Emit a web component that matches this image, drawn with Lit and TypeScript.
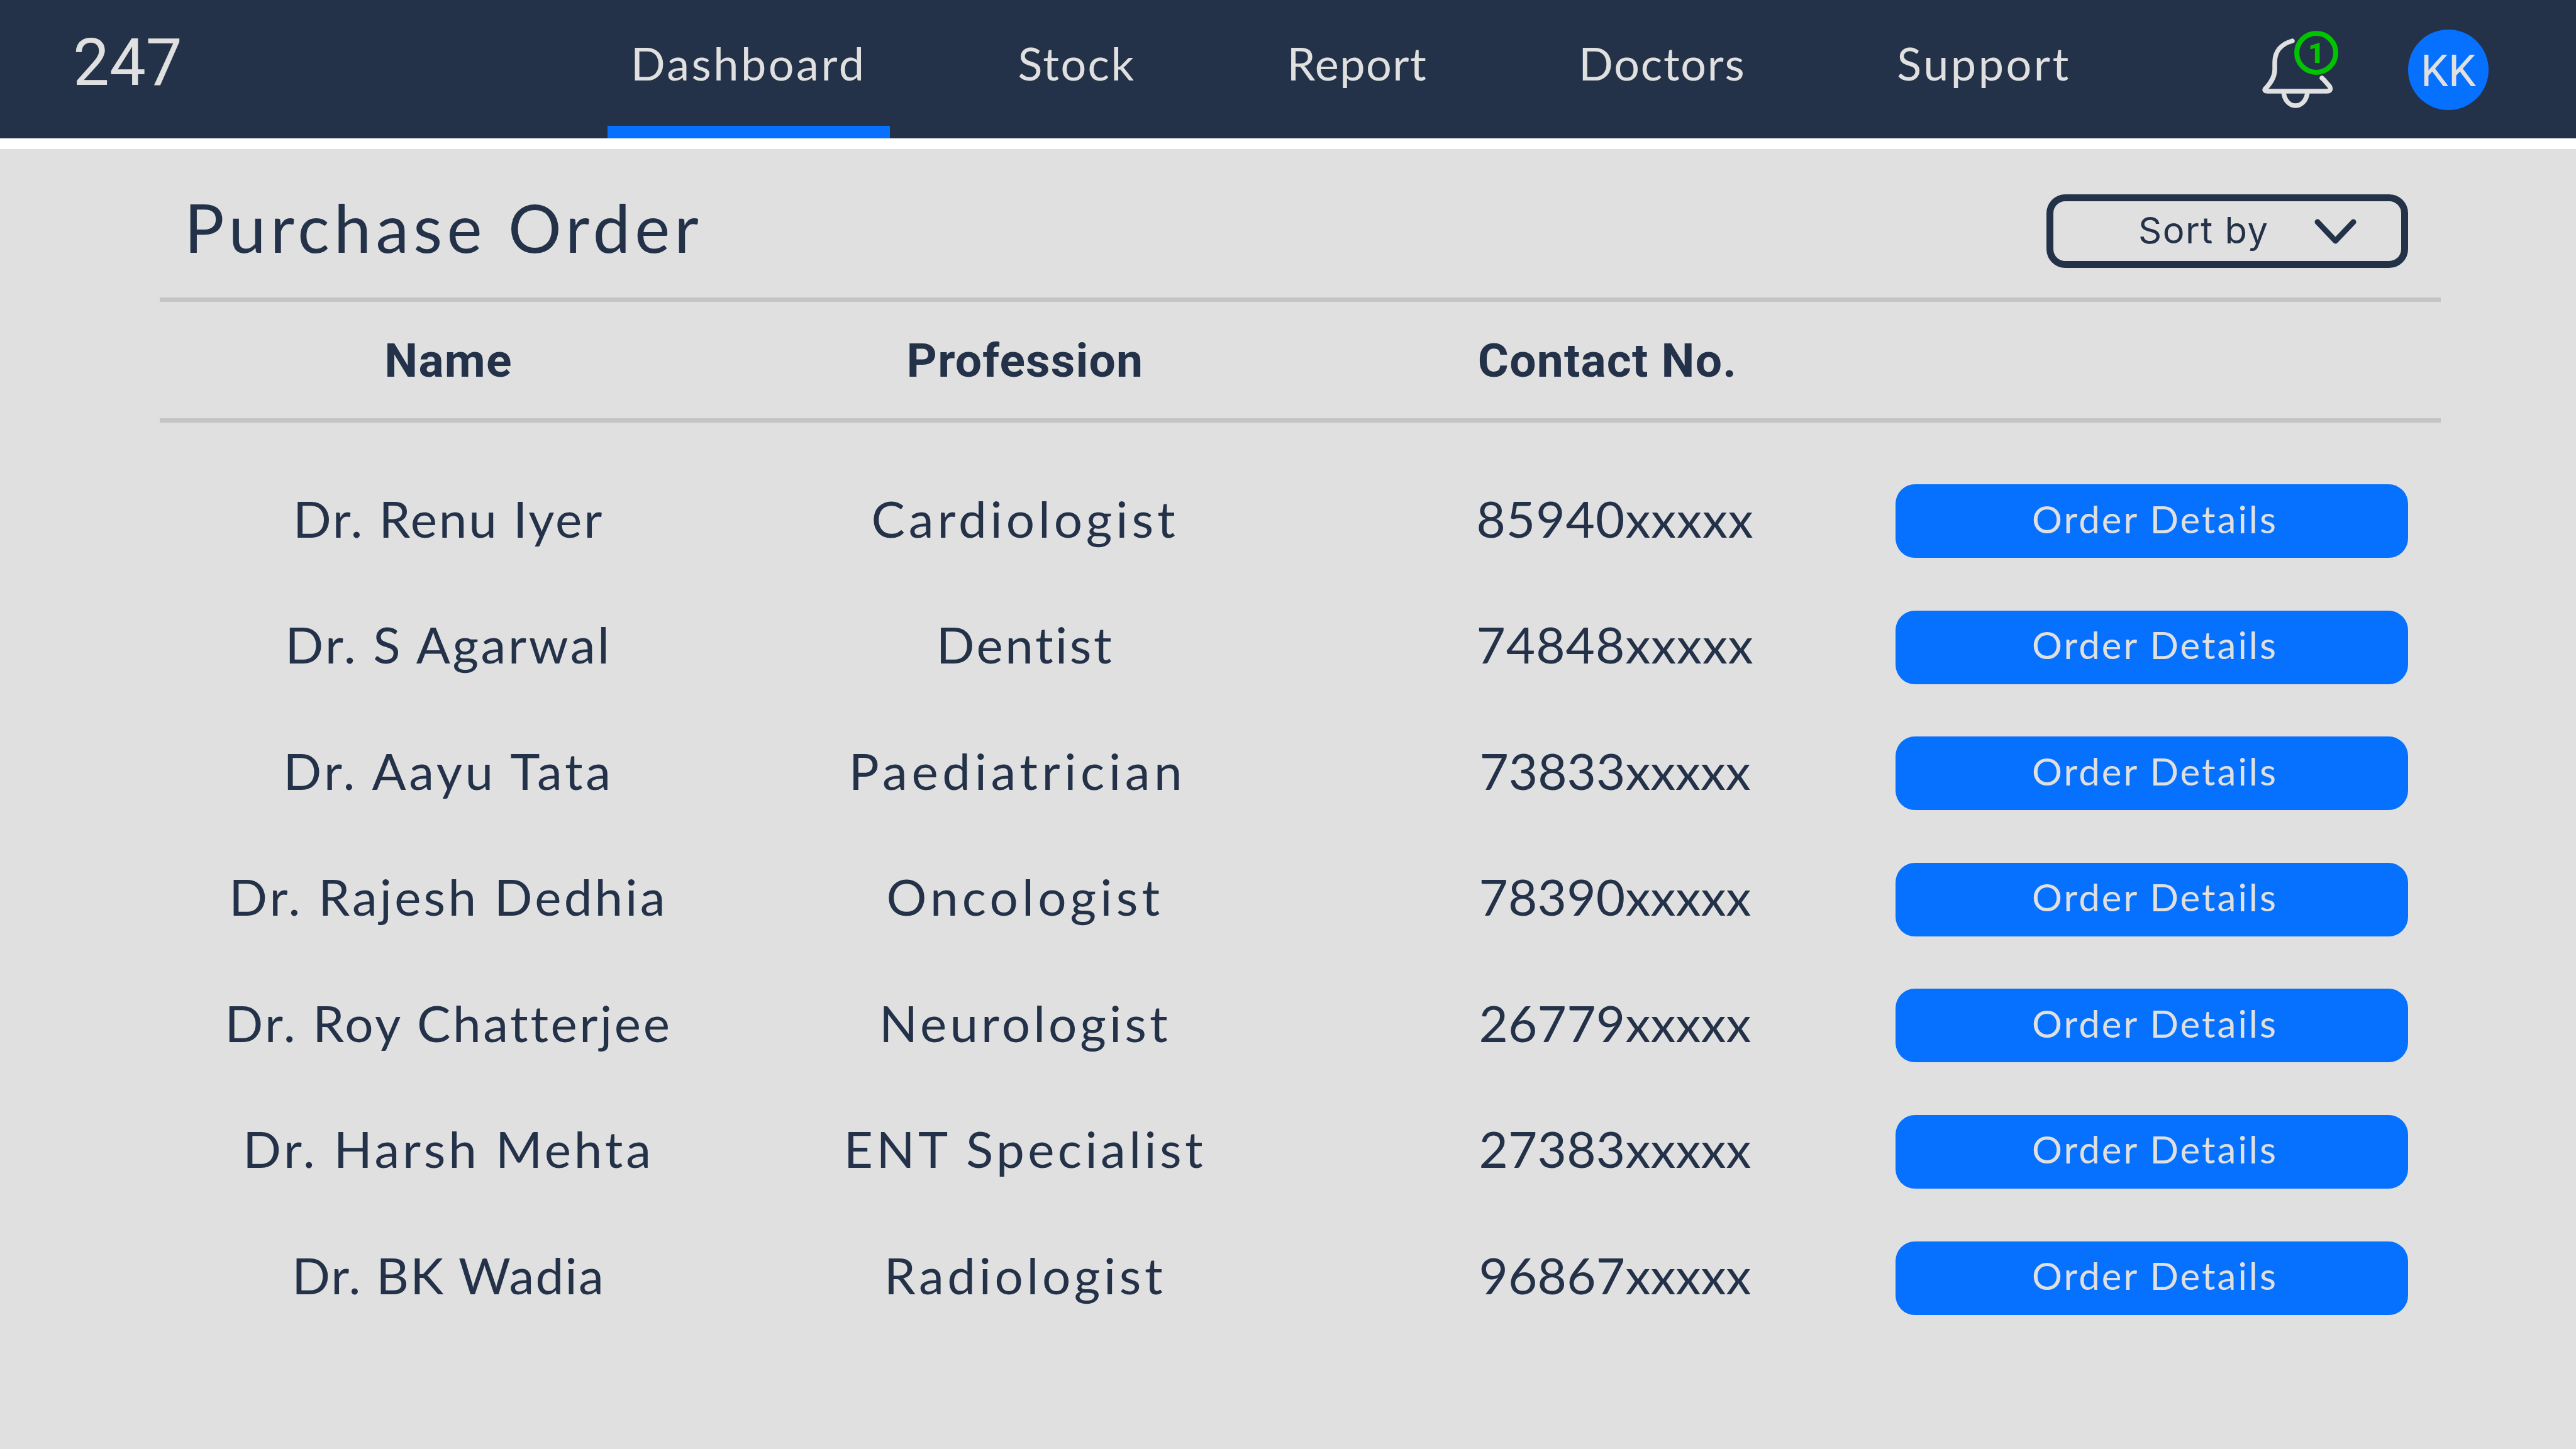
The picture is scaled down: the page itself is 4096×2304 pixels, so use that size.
import { LitElement, html, css, svg } from "lit";
import { customElement } from "lit/decorators.js";

const NAV: [string, number][] = [
  ["Dashboard", 3.5],
  ["Stock", 2.4],
  ["Report", 1.5],
  ["Doctors", 1.7],
  ["Support", 3.5],
];
type Row = { name: string; nls: number; job: string; jls: number; phone: string; pls: number; shift?: number };
const ROWS: Row[] = [
  { name: "Dr. Renu Iyer", nls: 2.8, job: "Cardiologist", jls: 5.9, phone: "85940xxxxx", pls: 1 },
  { name: "Dr. S Agarwal", nls: 3.6, job: "Dentist", jls: 3.5, phone: "74848xxxxx", pls: 1 },
  { name: "Dr. Aayu Tata", nls: 4.6, job: "Paediatrician", jls: 6.6, phone: "73833xxxxx", pls: 0, shift: 24 },
  { name: "Dr. Rajesh Dedhia", nls: 4.15, job: "Oncologist", jls: 6.2, phone: "78390xxxxx", pls: 0.2 },
  { name: "Dr. Roy Chatterjee", nls: 3.6, job: "Neurologist", jls: 5.1, phone: "26779xxxxx", pls: 0.2 },
  { name: "Dr. Harsh Mehta", nls: 4.8, job: "ENT Specialist", jls: 5.4, phone: "27383xxxxx", pls: 0.2 },
  { name: "Dr. BK Wadia", nls: 2.2, job: "Radiologist", jls: 5.6, phone: "96867xxxxx", pls: 0.2 },
];

const bell = svg`
  <path d="M49 16C31 21 21 33 21 50V62C21 74 14 83 8 90C3 94 5 96 10 96H104C109 96 111 93 108 88C103 83 100 78 96 75" fill="none" stroke="#e0e0e0" stroke-width="7.500" stroke-linecap="round" stroke-linejoin="round"/>
  <path d="M35 97C36 110 44 119 54 119C64 119 72 110 73 97" fill="none" stroke="#e0e0e0" stroke-width="7.500"/>
  <circle cx="87" cy="35" r="31" fill="none" stroke="#00c400" stroke-width="8"/>
  <text x="87" y="51" text-anchor="middle" font-family="Roboto, sans-serif" font-weight="900" font-size="45" fill="#00c400">1</text>`;

@customElement("app-root")
export class AppRoot extends LitElement {
  static styles = css`
    :host { display: block; width: 4096px; height: 2304px; overflow: hidden; background: #e0e0e0; color: #243249; font-family: "Lato", "Liberation Sans", sans-serif; }
    .top { height: 220px; background: #243249; color: #e0e0e0; display: flex; align-items: flex-start; box-sizing: border-box; padding-left: 116px; }
    .logo { width: 850px; flex: none; font-family: Roboto, sans-serif; font-size: 103px; line-height: 200px; }
    .nav { display: flex; gap: 167px; }
    .nav-item { height: 220px; box-sizing: border-box; padding: 6px 37px 0; line-height: 188px; border-bottom: 20px solid transparent; font-size: 72px; }
    .nav-item.active { border-bottom-color: #0671ff; }
    .tools { margin-left: auto; margin-right: 139px; display: flex; align-items: flex-start; }
    .bell { width: 122px; height: 124px; margin-top: 49px; margin-right: 111px; display: block; }
    .avatar { width: 128px; height: 128px; box-sizing: border-box; padding-top: 4px; margin-top: 47px; border-radius: 50%; background: #0671ff; display: flex; align-items: center; justify-content: center; font-family: Roboto, sans-serif; font-size: 70px; }
    .band { height: 17px; background: #fff; }
    .main { margin: 0 215px 0 254px; }
    .title-row { display: flex; justify-content: space-between; align-items: center; padding: 72px 52px 47px 39px; }
    .title { font-size: 106px; letter-spacing: 7.2px; padding-bottom: 12px; line-height: 105px; }
    .sort { width: 575px; height: 117px; box-sizing: border-box; border: 11px solid #243249; border-radius: 30px; display: flex; align-items: center; padding: 0 0 3px 135px; font-family: Inter, sans-serif; font-size: 58px; letter-spacing: 1.5px; }
    .sort svg { width: 65px; height: 38px; margin: 3px 0 0 73px; overflow: visible; }
    .grid { display: grid; grid-template-columns: 918px 916px 926px 815px; padding-right: 53px; }
    .head { box-sizing: border-box; border-top: 7px solid #c4c4c4; border-bottom: 7px solid #c4c4c4; height: 199px; align-items: center; font-family: Roboto, sans-serif; font-weight: 700; font-size: 75px; letter-spacing: 1.2px; text-align: center; }
    .contact { padding-left: 10px; }
    .body { padding-top: 98px; row-gap: 83.6px; grid-auto-rows: 117px; align-items: center; font-size: 80px; text-align: center; }
    .cell { padding-bottom: 10px; }
    .phone { padding-left: 34px; }
    .btn { height: 117px; box-sizing: border-box; padding: 0 0 8px 10px; border-radius: 31px; background: #0671ff; color: #e0e0e0; display: flex; align-items: center; justify-content: center; font-size: 60px; letter-spacing: 3px; }
  `;

  render() {
    return html`
      <div class="top">
        <div class="logo">247</div>
        <div class="nav">
          ${NAV.map(([n, ls], i) => html`<div class="nav-item ${i === 0 ? "active" : ""}" style="letter-spacing:${ls}px">${n}</div>`)}
        </div>
        <div class="tools">
          <svg class="bell" viewBox="0 0 122 124">${bell}</svg>
          <div class="avatar">KK</div>
        </div>
      </div>
      <div class="band"></div>
      <div class="main">
        <div class="title-row">
          <div class="title">Purchase Order</div>
          <div class="sort">Sort by
            <svg viewBox="0 0 65 38"><path d="M4 4L32.500 34L61 4" fill="none" stroke="#243249" stroke-width="9" stroke-linecap="round" stroke-linejoin="round"/></svg>
          </div>
        </div>
        <div class="grid head"><div>Name</div><div>Profession</div><div class="contact">Contact No.</div><div></div></div>
        <div class="grid body">
          ${ROWS.map((r) => html`
            <div class="cell" style="letter-spacing:${r.nls}px">${r.name}</div>
            <div class="cell" style="letter-spacing:${r.jls}px;padding-right:${r.shift ?? 0}px">${r.job}</div>
            <div class="cell phone" style="letter-spacing:${r.pls}px">${r.phone}</div>
            <div class="btn">Order Details</div>`)}
        </div>
      </div>`;
  }
}
